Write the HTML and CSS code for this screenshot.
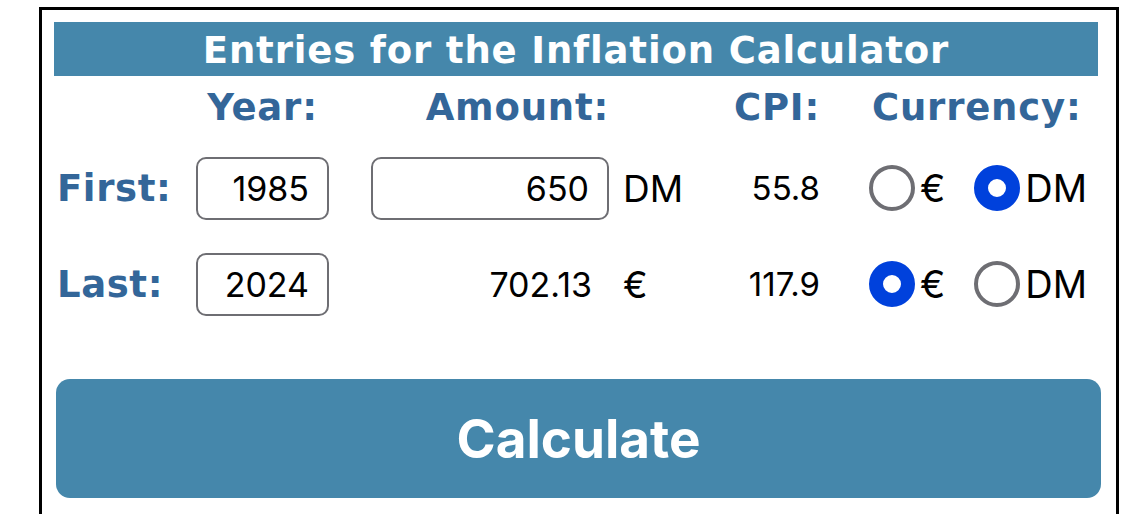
FILE: index.html
```html
<!DOCTYPE html>
<html lang="en">
<head>
    <meta charset="UTF-8">
    <title>Inflation Calculator</title>
    <link rel="stylesheet" href="styles.css">
</head>
<body>
<div class="frame">
    <div class="title">Entries for the Inflation Calculator</div>
    <form class="entries" onsubmit="return false;">
        <span class="head"></span>
        <span class="head year-head">Year:</span>
        <span class="head amount-head">Amount:</span>
        <span class="head"></span>
        <span class="head cpi-head">CPI:</span>
        <span class="head currency-head">Currency:</span>

        <span class="label">First:</span>
        <input class="field year" type="text" value="1985">
        <input class="field amount" type="text" value="650">
        <span class="unit">DM</span>
        <span class="cpi">55.8</span>
        <span class="currency">
            <input type="radio" name="cur1" id="c1e"><label for="c1e">€</label>
            <input type="radio" name="cur1" id="c1d" checked><label for="c1d">DM</label>
        </span>

        <span class="label">Last:</span>
        <input class="field year" type="text" value="2024">
        <span class="result">702.13</span>
        <span class="unit">€</span>
        <span class="cpi">117.9</span>
        <span class="currency">
            <input type="radio" name="cur2" id="c2e" checked><label for="c2e">€</label>
            <input type="radio" name="cur2" id="c2d"><label for="c2d">DM</label>
        </span>
    </form>
    <button class="calc" type="button">Calculate</button>
</div>
</body>
</html>
```

FILE: styles.css
```css
* {
    margin: 0;
    padding: 0;
    box-sizing: border-box;
}

body {
    background: #fff;
    font-family: Inter, "Liberation Sans", sans-serif;
    overflow: hidden;
}

.frame {
    width: 1080px;
    height: 507px;
    margin: 7px 0 0 39px;
    padding: 12px 18px 0 12px;
    border: 3px solid #000;
    border-bottom: none;
    overflow: hidden;
}

.title {
    height: 54px;
    line-height: 57px;
    background: #4587ab;
    color: #fff;
    font-family: "DejaVu Sans", Verdana, sans-serif;
    font-weight: bold;
    font-size: 37px;
    letter-spacing: 0.85px;
    text-align: center;
}

.entries {
    display: grid;
    grid-template-columns: 142px 133px 280px 91px 120px auto;
    grid-template-rows: 64px 96px 96px;
    align-items: center;
}

.head,
.label {
    font-family: "DejaVu Sans", Verdana, sans-serif;
    font-weight: bold;
    font-size: 37px;
    letter-spacing: 0.8px;
    color: #336699;
}

.head {
    align-self: end;
    line-height: 48px;
    margin-bottom: 8px;
}

.year-head {
    text-align: center;
}

.amount-head,
.cpi-head {
    text-align: right;
}

.currency-head {
    padding-left: 52px;
}

.label {
    padding-left: 3px;
    letter-spacing: 0.6px;
}

.field {
    height: 63px;
    border: 2px solid #6e6e73;
    border-radius: 10px;
    padding-right: 18px;
    font-family: Inter, "Liberation Sans", sans-serif;
    font-size: 34px;
    color: #000;
    text-align: right;
    background: #fff;
}

.year {
    width: 133px;
}

.amount {
    width: 238px;
    justify-self: end;
}

.result {
    text-align: right;
    padding-right: 17px;
    font-size: 34px;
}

.unit {
    padding-left: 14px;
    font-size: 37px;
}

.cpi {
    text-align: right;
    font-size: 33px;
}

.currency {
    display: flex;
    align-items: center;
    padding-left: 49px;
    font-size: 38px;
}

.currency label {
    margin-left: 5px;
    margin-right: 29px;
}

.currency input {
    appearance: none;
    -webkit-appearance: none;
    flex: none;
    width: 46px;
    height: 46px;
    border: 4px solid #6e6e73;
    border-radius: 50%;
    background: #fff;
}

.currency input:checked {
    border: 14px solid #0041dc;
}

.calc {
    display: block;
    width: 1045px;
    height: 119px;
    margin: 47px 0 0 2px;
    border: none;
    border-radius: 14px;
    background: #4587ab;
    color: #fff;
    font-family: Inter, "Liberation Sans", sans-serif;
    font-weight: bold;
    font-size: 53px;
}
```
